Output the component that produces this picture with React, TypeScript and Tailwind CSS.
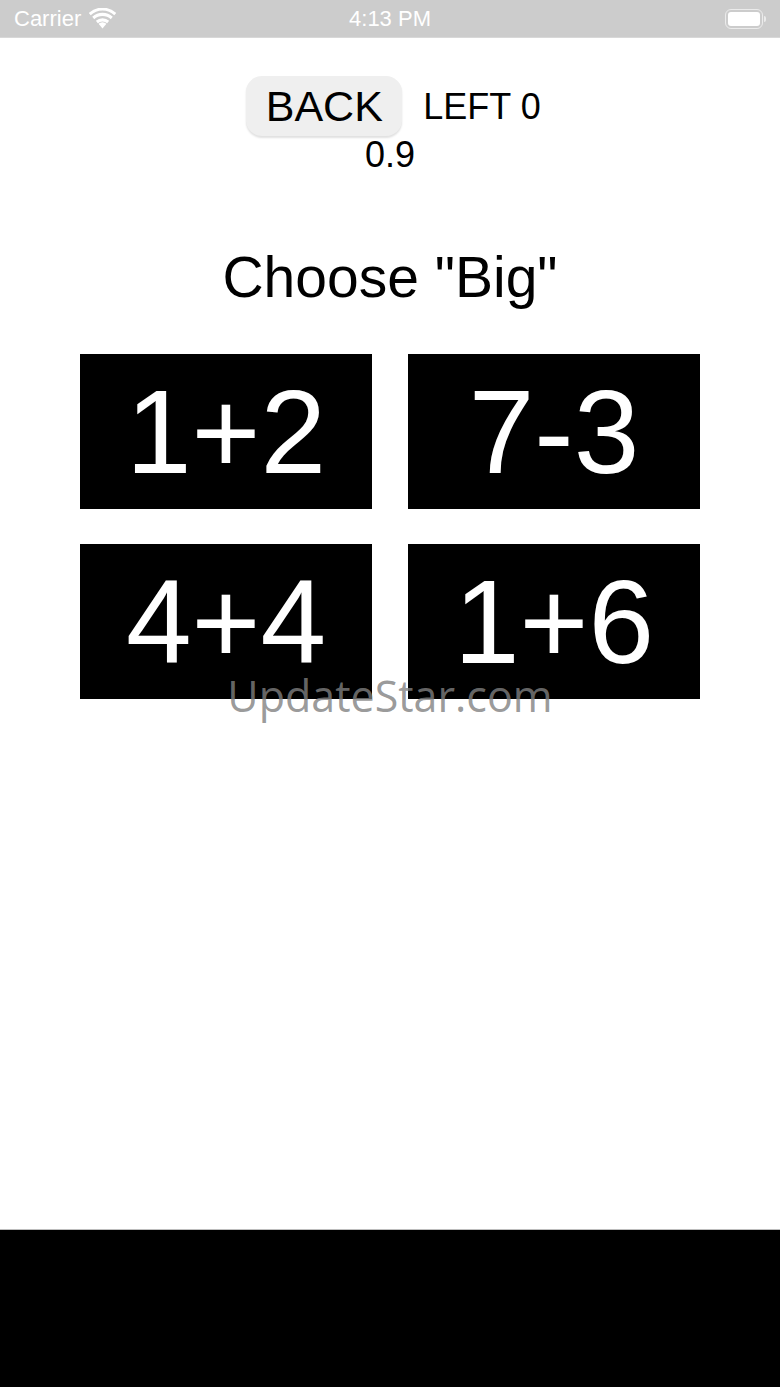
import React from "react";

const sans = { fontFamily: '"Liberation Sans", Arial, sans-serif' };

function Wifi() {
  return (
    <svg width="27" height="21" viewBox="0 0 22 18" fill="white">
      <path d="M11 17.5 L7.6 13.6 A5 5 0 0 1 14.4 13.6 Z" />
      <path d="M5.3 11 A8.6 8.6 0 0 1 16.7 11 L15 13 A6 6 0 0 0 7 13 Z" />
      <path d="M2.2 7.6 A13 13 0 0 1 19.8 7.6 L18.1 9.6 A10.3 10.3 0 0 0 3.9 9.6 Z" />
      <path d="M-0.8 4.3 A17.3 17.3 0 0 1 22.8 4.3 L21.1 6.3 A14.6 14.6 0 0 0 0.9 6.3 Z" />
    </svg>
  );
}

function Battery() {
  return (
    <div className="flex items-center">
      <div className="w-[38px] h-[20px] rounded-[6px] border border-white/60 p-[2px]">
        <div className="w-full h-full rounded-[3px] bg-white" />
      </div>
      <div className="w-[2px] h-[6px] rounded-r-sm bg-white/60 ml-[1px]" />
    </div>
  );
}

function Tile({ label }: { label: string }) {
  return (
    <button className="h-[155px] bg-black flex items-center justify-center">
      <span className="text-white text-[118px] leading-none" style={sans}>
        {label}
      </span>
    </button>
  );
}

export default function App() {
  return (
    <div className="relative w-[780px] h-[1387px] flex flex-col bg-white overflow-hidden" style={sans}>
      {/* status bar */}
      <div className="h-[38px] shrink-0 bg-[#cccccc] border-b border-[#d8d8d8] flex items-center px-[14px] text-white">
        <div className="flex-1 flex items-center gap-[8px]">
          <span className="text-[22px] leading-none">Carrier</span>
          <Wifi />
        </div>
        <span className="text-[22px] leading-none font-medium">4:13 PM</span>
        <div className="flex-1 flex justify-end">
          <Battery />
        </div>
      </div>

      {/* game area */}
      <div className="flex-1 flex flex-col items-center pt-[38px]">
        <div className="flex items-center gap-[21px] pl-[7px]">
          <button className="w-[156px] h-[60px] rounded-[16px] bg-[#efefef] shadow-[0_2px_2px_rgba(0,0,0,0.12)] flex items-center justify-center text-[43px] leading-none text-black">
            BACK
          </button>
          <span className="text-[36px] leading-none text-black pt-[2px]">LEFT 0</span>
        </div>
        <div className="mt-[1px] text-[36px] leading-none text-black">0.9</div>

        <div className="mt-[76px] text-[57px] leading-none text-black">Choose "Big"</div>

        <div className="mt-[48px] w-[620px] grid grid-cols-2 gap-x-[36px] gap-y-[35px]">
          <Tile label="1+2" />
          <Tile label="7-3" />
          <Tile label="4+4" />
          <Tile label="1+6" />
        </div>
      </div>

      {/* bottom panel */}
      <div className="h-[158px] shrink-0 bg-black border-t border-[#bdbdbd]" />

      {/* watermark overlay */}
      <div
        className="absolute left-0 right-0 top-[674px] text-center text-[43px] leading-none text-[#808080]/80 pointer-events-none"
        style={{ fontFamily: '"Open Sans", "Noto Sans", sans-serif' }}
      >
        UpdateStar.com
      </div>
    </div>
  );
}
